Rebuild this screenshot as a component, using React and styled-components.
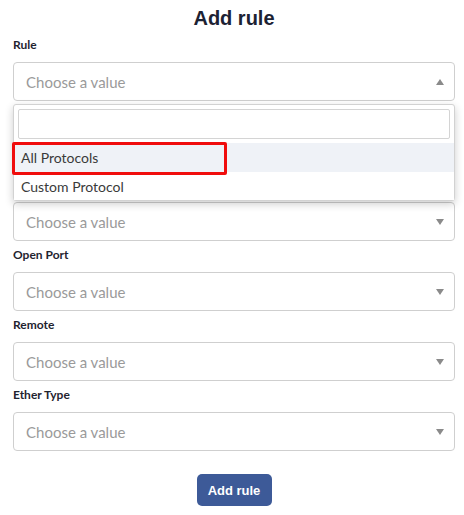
import React from 'react';
import styled, { createGlobalStyle } from 'styled-components';

const GlobalStyle = createGlobalStyle`
  body {
    margin: 0;
    background: #ffffff;
    font-family: 'Lato', 'Open Sans', sans-serif;
  }
`;

// the two fields after Rule sit under the open menu
const fields = [
  { label: 'Rule', open: true },
  { label: 'Protocol' },
  { label: 'Direction' },
  { label: 'Open Port' },
  { label: 'Remote' },
  { label: 'Ether Type' },
];

const options = ['All Protocols', 'Custom Protocol'];

const App = () => {
  return (
    <>
      <GlobalStyle />
      <Page>
        <Title>Add rule</Title>
        {fields.map((field, index) => (
          <Field key={index}>
            <Label>{field.label}</Label>
            <SelectWrap>
              <SelectBox>
                <Placeholder>Choose a value</Placeholder>
                <Arrow $up={field.open} />
              </SelectBox>
              {field.open && (
                <Dropdown>
                  <Search type='text' />
                  {options.map((opt, i) => (
                    <Option key={i} $active={i === 0}>
                      {opt}
                      {i === 0 && <Highlight />}
                    </Option>
                  ))}
                </Dropdown>
              )}
            </SelectWrap>
          </Field>
        ))}
        <Footer>
          <SubmitButton>Add rule</SubmitButton>
        </Footer>
      </Page>
    </>
  );
};

const Page = styled.div`
  padding: 0 9px 0 13px;
`;

const Title = styled.h1`
  margin: 6px 0 0;
  font-family: 'Liberation Sans', Arial, sans-serif;
  font-size: 20px;
  line-height: 24px;
  font-weight: 700;
  color: #1c2233;
  text-align: center;
`;

const Field = styled.div`
  display: flex;
  flex-direction: column;
  gap: 8px;
  margin-top: 5px;
  &:first-of-type {
    margin-top: 6px;
  }
`;

const Label = styled.label`
  font-size: 12px;
  line-height: 18px;
  font-weight: 700;
  color: #1f2430;
`;

const SelectWrap = styled.div`
  position: relative;
`;

const SelectBox = styled.div`
  box-sizing: border-box;
  height: 39px;
  display: flex;
  align-items: center;
  justify-content: space-between;
  padding: 0 10px 0 12px;
  border: 1px solid #cfcfcf;
  border-radius: 4px;
  background: #fff;
`;

const Placeholder = styled.span`
  font-size: 15px;
  color: #9a9a9a;
`;

const Arrow = styled.span`
  width: 0;
  height: 0;
  border-left: 4px solid transparent;
  border-right: 4px solid transparent;
  ${(p) =>
    p.$up
      ? 'border-bottom: 6px solid #8a8a8a;'
      : 'border-top: 6px solid #8a8a8a;'}
`;

const Dropdown = styled.div`
  position: absolute;
  top: 42px;
  left: 0;
  right: 0;
  z-index: 10;
  box-sizing: border-box;
  padding-top: 4px;
  border: 1px solid #d2d2d2;
  border-radius: 3px;
  background: #fff;
  box-shadow: 0 3px 8px rgba(0, 0, 0, 0.2);
`;

const Search = styled.input`
  display: block;
  box-sizing: border-box;
  width: calc(100% - 8px);
  height: 30px;
  margin: 0 4px 4px;
  border: 1px solid #d4d4d4;
  border-radius: 2px;
  outline: none;
`;

const Option = styled.div`
  position: relative;
  height: 29px;
  display: flex;
  align-items: center;
  padding-left: 7px;
  font-size: 14px;
  color: #3a3a3a;
  background: ${(p) => (p.$active ? '#eff2f7' : '#fff')};
  &:last-child {
    height: 28px;
  }
`;

const Highlight = styled.span`
  position: absolute;
  z-index: 2;
  left: -2px;
  top: -1px;
  width: 215px;
  height: 33px;
  box-sizing: border-box;
  border: 3px solid #f00d0d;
  border-radius: 2px;
`;

const Footer = styled.div`
  display: flex;
  justify-content: center;
  margin-top: 23px;
`;

const SubmitButton = styled.button`
  width: 75px;
  height: 32px;
  border: none;
  border-radius: 5px;
  background: #3d5a98;
  color: #fff;
  font-family: 'Liberation Sans', Arial, sans-serif;
  font-size: 13px;
  font-weight: 700;
  cursor: pointer;
`;

export default App;
